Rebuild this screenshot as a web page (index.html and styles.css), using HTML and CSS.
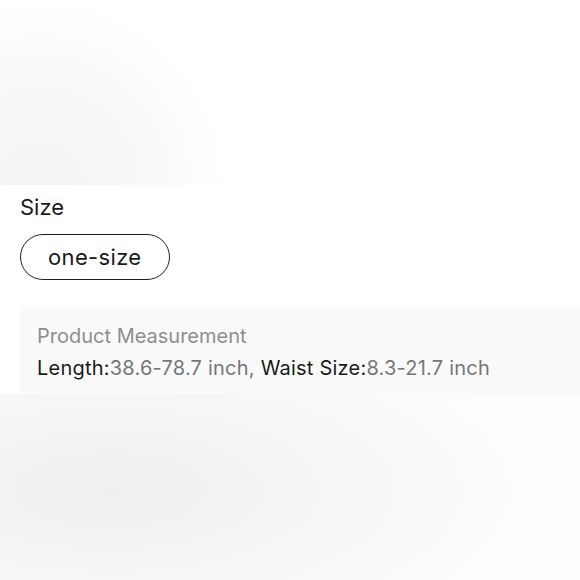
FILE: index.html
```html
<!DOCTYPE html>
<html lang="en">
<head>
<meta charset="utf-8">
<title>Size</title>
<link rel="stylesheet" href="styles.css">
</head>
<body>
<div class="page">
  <div class="hero"></div>
  <section class="size-section">
    <div class="size-label">Size</div>
    <div class="chips">
      <button class="chip" type="button">one-size</button>
    </div>
    <div class="measure">
      <div class="measure-title">Product Measurement</div>
      <div class="measure-line"><span class="key">Length:</span><span class="val">38.6-78.7 inch</span><span class="val">, </span><span class="key">Waist Size:</span><span class="val">8.3-21.7 inch</span></div>
    </div>
  </section>
  <div class="below"></div>
</div>
</body>
</html>
```

FILE: styles.css
```css
html, body {
  margin: 0;
  padding: 0;
  background: #fff;
}
body {
  font-family: Inter, "Noto Sans", "Liberation Sans", sans-serif;
  color: #1a1a1a;
}
.page {
  width: 580px;
  height: 580px;
  display: flex;
  flex-direction: column;
  overflow: hidden;
}
.hero {
  height: 185px;
  flex: none;
  background: radial-gradient(190px 190px at 40px 185px, #f3f3f3 0%, #f8f8f8 50%, #ffffff 100%);
}
.size-section {
  flex: none;
  padding: 7px 0 0 20px;
  display: flex;
  flex-direction: column;
}
.size-label {
  font-size: 22px;
  line-height: 30px;
  color: #1a1a1a;
}
.chips {
  margin-top: 12px;
  display: flex;
}
.chip {
  font-family: inherit;
  font-size: 22px;
  letter-spacing: 0.35px;
  line-height: 43px;
  height: 46px;
  box-sizing: border-box;
  padding: 0 27px;
  border: 1.6px solid #1f1f1f;
  border-radius: 23px;
  background: #fff;
  color: #1a1a1a;
}
.measure {
  margin-top: 27px;
  background: #fafafa;
  padding: 14px 0 11px 17px;
  display: flex;
  flex-direction: column;
  gap: 2px;
}
.measure-title {
  font-size: 20px;
  line-height: 30px;
  color: #8e8e8e;
}
.measure-line {
  font-size: 20px;
  line-height: 30px;
  letter-spacing: 0.22px;
  white-space: nowrap;
}
.key {
  color: #1a1a1a;
}
.val {
  color: #777;
}
.below {
  flex: 1;
  background: radial-gradient(430px 170px at 110px 96px, #efefef 0%, #f3f3f3 35%, #f9f9f9 70%, #fdfdfd 100%);
}
```
